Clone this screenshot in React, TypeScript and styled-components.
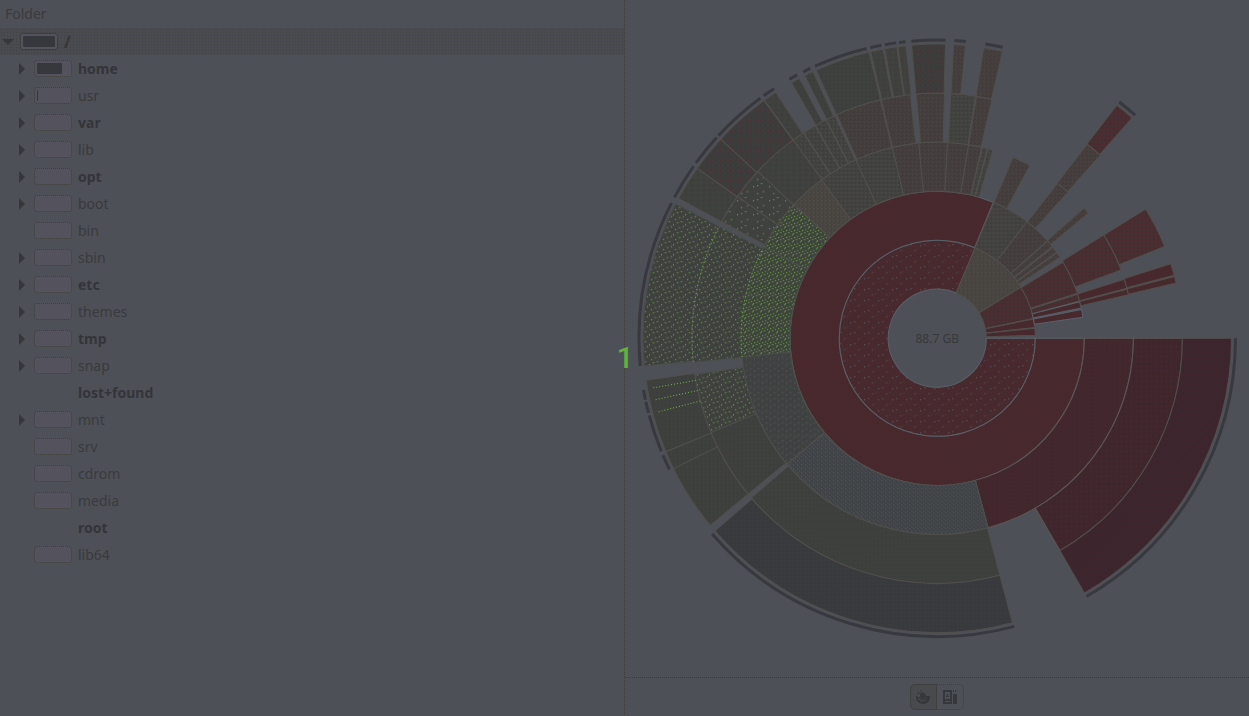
import React, { useState } from 'react';
import styled, { createGlobalStyle } from 'styled-components';

const GlobalStyle = createGlobalStyle`
  * { box-sizing: border-box; }
  body {
    margin: 0;
    background: #4e5058;
    color: #393b3c;
    font-family: "Noto Sans", "Open Sans", sans-serif;
    font-size: 14px;
  }
`;

const Window = styled.main`
  position: relative;
  display: grid;
  grid-template-columns: 1fr 1fr;
  min-height: 100vh;
`;

const FolderPane = styled.section`
  border-right: 1px dotted #3d3c38;
`;

const Header = styled.h2`
  margin: 0;
  padding: 0 5px;
  height: 28px;
  font-size: 14px;
  font-weight: 400;
  line-height: 28px;
`;

const Tree = styled.ul`
  margin: 0;
  padding: 0;
  list-style: none;
`;

const Row = styled.li<{ $root?: boolean }>`
  display: flex;
  align-items: center;
  height: 27px;
  padding-left: ${(p) => (p.$root ? 0 : 14)}px;
  background-color: ${(p) => (p.$root ? '#4a4b50' : 'transparent')};
  background-image: ${(p) =>
    p.$root ? 'radial-gradient(circle, #42433f 1px, transparent 1px)' : 'none'};
  background-size: 3px 3px;
`;

const Expander = styled.button`
  display: flex;
  align-items: center;
  justify-content: center;
  width: 16px;
  height: 16px;
  padding: 0;
  border: 0;
  background: none;
  color: #36373b;
`;

const ExpanderSpace = styled.span`
  width: 16px;
`;

const Usage = styled.span<{ $hidden?: boolean; $solid?: boolean }>`
  display: flex;
  width: 38px;
  height: 17px;
  margin: 0 6px 0 4px;
  padding: 2px;
  border: 1px ${(p) => (p.$solid ? 'solid' : 'dotted')} #3f3e3b;
  border-radius: 3px;
  background: #53525d;
  visibility: ${(p) => (p.$hidden ? 'hidden' : 'visible')};
`;

const UsageFill = styled.span`
  border-radius: 1px;
  background: #37383d;
`;

const Name = styled.span<{ $bold?: boolean; $large?: boolean }>`
  color: ${(p) => (p.$bold ? '#343539' : 'inherit')};
  font-size: ${(p) => (p.$large ? 16 : 14)}px;
  font-weight: ${(p) => (p.$bold ? 700 : 400)};
  line-height: 20px;
`;

const ChartPane = styled.section`
  display: flex;
  flex-direction: column;
`;

const ChartArea = styled.div`
  flex: 1;
  display: flex;
`;

const Chart = styled.svg`
  width: 100%;
  height: 100%;
  display: block;
`;

const Total = styled.text`
  font-size: 12px;
  fill: #37393a;
  text-anchor: middle;
`;

const ViewBar = styled.footer`
  display: flex;
  align-items: center;
  justify-content: center;
  height: 40px;
  border-top: 1px dotted #3d3c38;
`;

const ViewButton = styled.button<{ $side: 'left' | 'right'; $active: boolean }>`
  display: flex;
  align-items: center;
  justify-content: center;
  width: 27px;
  height: 26px;
  padding: 0;
  border: 1px ${(p) => (p.$active ? 'solid' : 'dotted')} #3f3f3d;
  border-left-width: ${(p) => (p.$side === 'left' ? 1 : 0)}px;
  border-radius: ${(p) => (p.$side === 'left' ? '5px 0 0 5px' : '0 5px 5px 0')};
  background: ${(p) => (p.$active ? '#484a4e' : 'transparent')};
  color: #36373b;
`;

const Marker = styled.span`
  position: absolute;
  left: calc(50% - 8px);
  top: 342px;
  color: #62b13c;
  font-family: Roboto, sans-serif;
  font-size: 30px;
  font-weight: 500;
  line-height: 32px;
`;

interface Folder {
  name: string;
  bold?: boolean;
  leaf?: boolean;
  noBar?: boolean;
  used?: number;
}

const folders: Folder[] = [
  { name: 'home', bold: true, used: 78 },
  { name: 'usr', used: 3 },
  { name: 'var', bold: true },
  { name: 'lib' },
  { name: 'opt', bold: true },
  { name: 'boot' },
  { name: 'bin', leaf: true },
  { name: 'sbin' },
  { name: 'etc', bold: true },
  { name: 'themes' },
  { name: 'tmp', bold: true },
  { name: 'snap' },
  { name: 'lost+found', bold: true, leaf: true, noBar: true },
  { name: 'mnt' },
  { name: 'srv', leaf: true },
  { name: 'cdrom', leaf: true },
  { name: 'media', leaf: true },
  { name: 'root', bold: true, leaf: true, noBar: true },
  { name: 'lib64', leaf: true },
];

/* Ring edges: the hub, then five levels of folders. */
const R = [49, 98, 147, 196, 245, 294];
const CX = 312;
const CY = 338;

const point = (r: number, deg: number) => {
  const a = (deg * Math.PI) / 180;
  return `${(CX + r * Math.cos(a)).toFixed(2)} ${(CY + r * Math.sin(a)).toFixed(2)}`;
};

const sector = (level: number, from: number, to: number) => {
  const r0 = R[level - 1];
  const r1 = R[level];
  const large = to - from > 180 ? 1 : 0;
  return `M${point(r0, from)}L${point(r1, from)}A${r1} ${r1} 0 ${large} 1 ${point(r1, to)}L${point(r0, to)}A${r0} ${r0} 0 ${large} 0 ${point(r0, from)}Z`;
};

const arc = (r: number, from: number, to: number) =>
  `M${point(r, from)}A${r} ${r} 0 0 1 ${point(r, to)}`;

type Tone =
  | 'inner' | 'red' | 'plum' | 'wine' | 'deep'
  | 'taupe' | 'rust' | 'brick' | 'ember' | 'umber' | 'olive' | 'moss' | 'slate' | 'ash' | 'coal'
  | 'leaf' | 'leafDense' | 'leafSparse';

/* level, start and end in degrees clockwise from east, tone */
type Segment = [number, number, number, Tone];

const segments: Segment[] = [
  [1, 0, 292.7, 'inner'],
  [1, 292.7, 328.6, 'taupe'],
  [1, 328.6, 348.4, 'brick'],
  [1, 348.7, 353.7, 'red'],
  [1, 354.2, 358.2, 'red'],
  [2, 0, 292.4, 'red'],
  [2, 292.7, 307.6, 'umber'],
  [2, 307.6, 318.5, 'rust'],
  [2, 318.7, 321.4, 'rust'],
  [2, 321.8, 324.2, 'rust'],
  [2, 324.5, 326.6, 'rust'],
  [2, 328.8, 342.2, 'brick'],
  [2, 342.6, 345.3, 'brick'],
  [2, 345.6, 348.1, 'red'],
  [2, 348.7, 351.8, 'red'],
  [3, 0, 75, 'plum'],
  [3, 75, 140.1, 'slate'],
  [3, 140.1, 174.6, 'ash'],
  [3, 174.6, 207.8, 'leafDense'],
  [3, 207.8, 223.1, 'leafDense'],
  [3, 223.1, 233.9, 'taupe'],
  [3, 233.9, 245.5, 'umber'],
  [3, 245.5, 256.8, 'umber'],
  [3, 256.8, 264.6, 'rust'],
  [3, 264.6, 273, 'rust'],
  [3, 273, 279.2, 'rust'],
  [3, 279.2, 283.1, 'rust'],
  [3, 283.3, 284.8, 'umber'],
  [3, 285, 286.5, 'umber'],
  [3, 292.7, 298.2, 'rust'],
  [3, 307.8, 311.8, 'rust'],
  [3, 318.4, 320.4, 'rust'],
  [3, 328.2, 339.6, 'brick'],
  [3, 342.5, 345.2, 'red'],
  [3, 345.5, 347.2, 'red'],
  [4, 0, 60, 'wine'],
  [4, 75.2, 139.4, 'moss'],
  [4, 140.5, 157.4, 'moss'],
  [4, 157.4, 171.5, 'leaf'],
  [4, 174.4, 207.2, 'leaf'],
  [4, 208.4, 215.4, 'leafSparse'],
  [4, 215.4, 222.9, 'leafSparse'],
  [4, 222.9, 234, 'olive'],
  [4, 234, 236.9, 'umber'],
  [4, 237, 240.1, 'umber'],
  [4, 240.2, 243, 'umber'],
  [4, 243.1, 245.3, 'umber'],
  [4, 245.8, 256.6, 'rust'],
  [4, 256.8, 263.7, 'rust'],
  [4, 265.1, 271.7, 'rust'],
  [4, 273.2, 279, 'umber'],
  [4, 279.2, 282.9, 'rust'],
  [4, 307.7, 311.7, 'rust'],
  [4, 328.2, 338, 'brick'],
  [4, 342.3, 345.1, 'red'],
  [4, 345.4, 347, 'red'],
  [5, 0, 60, 'deep'],
  [5, 75.2, 139.1, 'coal'],
  [5, 140.5, 153.7, 'moss'],
  [5, 153.7, 157.3, 'moss'],
  [5, 157.3, 171.8, 'moss'],
  [5, 174.6, 207.2, 'leaf'],
  [5, 208.4, 215.3, 'olive'],
  [5, 215.3, 222.6, 'ember'],
  [5, 222.6, 233.9, 'ember'],
  [5, 234, 236.7, 'olive'],
  [5, 240.3, 242.1, 'moss'],
  [5, 243.2, 245, 'moss'],
  [5, 245.7, 256.6, 'moss'],
  [5, 256.9, 259.4, 'olive'],
  [5, 259.7, 262.1, 'olive'],
  [5, 262.3, 263.9, 'olive'],
  [5, 265, 271.6, 'ember'],
  [5, 273.2, 275.5, 'rust'],
  [5, 279.1, 282.8, 'rust'],
  [5, 307.6, 311.5, 'brick'],
];

/* Stretches of the outer rim that mark folders going deeper than five levels. */
const rim: [number, number][] = [
  [0, 60], [75, 139], [153.9, 156.9], [157.7, 165], [165.5, 167.7], [168.1, 170],
  [174.7, 207], [208.2, 215.2], [216, 222.3], [222.8, 233.6], [234.4, 236.8],
  [240.3, 242], [243.3, 244.8], [245.8, 256.3], [257, 259.2], [259.9, 262.1],
  [262.6, 263.9], [265, 271.6], [273.3, 275.5], [279.3, 282.7], [307.6, 311.6],
];

interface Grain {
  base: string;
  size: [number, number];
  dots: [number, number, string][];
}

const GREEN = '#72bb40';

const grains: Record<Tone, Grain> = {
  inner: { base: '#48292d', size: [14, 11], dots: [[1, 3, '#5b6670'], [5, 2, '#5b6670'], [9, 8, '#5b6670'], [12, 7, '#4c4142'], [3, 6, '#3f3335']] },
  red: { base: '#48282c', size: [4, 4], dots: [[0, 0, '#42302f'], [2, 2, '#42302f']] },
  plum: { base: '#42272d', size: [5, 4], dots: [[0, 0, '#3c262e'], [2, 2, '#3c262e'], [4, 1, '#4c2a2d']] },
  wine: { base: '#3f262d', size: [5, 5], dots: [[0, 0, '#4b292d'], [1, 1, '#4b292d'], [3, 3, '#39262e']] },
  deep: { base: '#3d252d', size: [8, 8], dots: [[1, 2, '#37343b'], [5, 6, '#45282e']] },
  taupe: { base: '#474541', size: [4, 4], dots: [[0, 0, '#565149'], [2, 1, '#3e403d'], [1, 3, '#503c3b'], [3, 2, '#565149']] },
  rust: { base: '#414240', size: [4, 4], dots: [[0, 0, '#5b272c'], [2, 2, '#5b272c'], [1, 3, '#35383a'], [3, 1, '#4d4842']] },
  brick: { base: '#472d30', size: [4, 4], dots: [[0, 0, '#5b242a'], [2, 1, '#3e403e'], [1, 3, '#53292d'], [3, 2, '#383939']] },
  ember: { base: '#3c3d3c', size: [5, 5], dots: [[0, 0, '#57292d'], [3, 2, '#57292d'], [1, 3, '#323538']] },
  umber: { base: '#414340', size: [4, 4], dots: [[0, 0, '#524d47'], [2, 2, '#393b3b'], [1, 3, '#542e31']] },
  olive: { base: '#3f413e', size: [6, 5], dots: [[0, 0, '#54302f'], [3, 2, '#4b4a46'], [1, 4, '#383b3b']] },
  moss: { base: '#3e403e', size: [4, 4], dots: [[0, 0, '#383b3c'], [2, 2, '#43443f']] },
  slate: { base: '#414447', size: [4, 4], dots: [[0, 0, '#555a66'], [2, 2, '#555a66'], [1, 3, '#373a3d'], [3, 1, '#373a3d']] },
  ash: { base: '#3f4240', size: [8, 6], dots: [[1, 4, '#555c64'], [5, 2, '#555c64'], [3, 0, '#383b3b']] },
  coal: { base: '#393a3d', size: [4, 4], dots: [[0, 0, '#40413f'], [1, 1, '#353639']] },
  leaf: { base: '#3e413e', size: [12, 10], dots: [[0, 4, GREEN], [4, 2, GREEN], [8, 1, GREEN], [2, 9, GREEN], [6, 7, GREEN], [10, 6, GREEN], [7, 4, '#313434']] },
  leafDense: { base: '#3f423e', size: [8, 7], dots: [[0, 2, GREEN], [3, 1, GREEN], [6, 0, GREEN], [1, 6, GREEN], [4, 5, GREEN], [7, 3, GREEN]] },
  leafSparse: { base: '#3f413e', size: [16, 14], dots: [[0, 4, GREEN], [4, 3, GREEN], [8, 1, GREEN], [10, 9, GREEN], [4, 11, GREEN], [12, 5, '#54302f'], [7, 7, '#54302f'], [1, 9, '#4b4a46']] },
};

const edgeColor = (level: number, tone: Tone) => {
  if (tone === 'inner' || (tone === 'red' && level === 2)) return '#59616a';
  if (tone === 'plum' || tone === 'wine') return '#5d5856';
  if (tone === 'leaf' || tone === 'leafDense') return '#4a4f49';
  return '#514f4c';
};

function SunburstIcon() {
  return (
    <svg width="18" height="18" viewBox="0 0 18 18" aria-hidden="true">
      <path d="M2 8 A7 7 0 0 0 16 10 L16 8 H12 A3 3 0 0 1 6 9 Z" fill="currentColor" />
      <path d="M4 7 V4 L7 6 V2 M8 5 H11" stroke="currentColor" strokeWidth="1" strokeDasharray="2 1" fill="none" />
      <circle cx="9" cy="8" r="3" fill="currentColor" />
      <path d="M5 7 A4 4 0 0 0 12 11" stroke="#54545a" strokeWidth="1" strokeDasharray="2 1" fill="none" />
    </svg>
  );
}

function TreemapIcon() {
  return (
    <svg width="16" height="16" viewBox="0 0 16 16" aria-hidden="true" shapeRendering="crispEdges">
      <path d="M1 1H10V15H1ZM3 3V10H8V3ZM3 12V13H8V12Z" fill="currentColor" fillRule="evenodd" />
      <path d="M5 5H6V7H7V8H4V7H5ZM11 5H15V15H11ZM11 1H12V3H11ZM13 1H14V3H13Z" fill="currentColor" />
    </svg>
  );
}

function Sunburst() {
  return (
    <Chart viewBox="0 0 624 676" preserveAspectRatio="xMaxYMid meet" role="img" aria-label="Disk usage rings">
      <defs>
        {Object.entries(grains).map(([id, g]) => (
          <pattern key={id} id={id} width={g.size[0]} height={g.size[1]} patternUnits="userSpaceOnUse">
            <rect width={g.size[0]} height={g.size[1]} fill={g.base} />
            {g.dots.map(([x, y, c]) => (
              <rect key={`${x}-${y}`} x={x} y={y} width="1" height="1" fill={c} />
            ))}
          </pattern>
        ))}
      </defs>
      {segments.map(([level, from, to, tone]) => (
        <path
          key={`${level}-${from}`}
          d={sector(level, from, to)}
          fill={`url(#${tone})`}
          stroke={edgeColor(level, tone)}
          strokeWidth="1"
        />
      ))}
      {[165.2, 167.7, 170.1].map((a) => (
        <path key={a} d={`M${point(245, a)}L${point(288, a)}`} stroke={GREEN} strokeDasharray="1 2" />
      ))}
      {[196, 245].map((r) => (
        <path key={r} d={arc(r, 174.5, 207)} fill="none" stroke={GREEN} strokeDasharray="1 3" />
      ))}
      {rim.map(([from, to]) => (
        <path key={from} d={arc(298, from, to)} fill="none" stroke="#38393e" strokeWidth="3" />
      ))}
      <Total x={CX} y={CY + 5}>88.7 GB</Total>
    </Chart>
  );
}

export default function App() {
  const [view, setView] = useState<'rings' | 'treemap'>('rings');
  return (
    <>
      <GlobalStyle />
      <Window>
        <FolderPane>
          <Header>Folder</Header>
          <Tree>
            <Row $root>
              <Expander aria-label="Collapse /">
                <svg width="12" height="6" viewBox="0 0 12 6"><path d="M0 0H12L6 6Z" fill="currentColor" /></svg>
              </Expander>
              <Usage $solid><UsageFill style={{ width: '100%' }} /></Usage>
              <Name $bold $large>/</Name>
            </Row>
            {folders.map((f) => (
              <Row key={f.name}>
                {f.leaf ? (
                  <ExpanderSpace />
                ) : (
                  <Expander aria-label={`Expand ${f.name}`}>
                    <svg width="6" height="12" viewBox="0 0 6 12"><path d="M0 0V12L6 6Z" fill="currentColor" /></svg>
                  </Expander>
                )}
                <Usage $hidden={f.noBar}>
                  {f.used ? <UsageFill style={{ width: `${f.used}%` }} /> : null}
                </Usage>
                <Name $bold={f.bold}>{f.name}</Name>
              </Row>
            ))}
          </Tree>
        </FolderPane>
        <ChartPane>
          <ChartArea><Sunburst /></ChartArea>
          <ViewBar>
            <ViewButton $side="left" $active={view === 'rings'} aria-label="Rings chart" onClick={() => setView('rings')}>
              <SunburstIcon />
            </ViewButton>
            <ViewButton $side="right" $active={view === 'treemap'} aria-label="Treemap chart" onClick={() => setView('treemap')}>
              <TreemapIcon />
            </ViewButton>
          </ViewBar>
        </ChartPane>
        <Marker>1</Marker>
      </Window>
    </>
  );
}
